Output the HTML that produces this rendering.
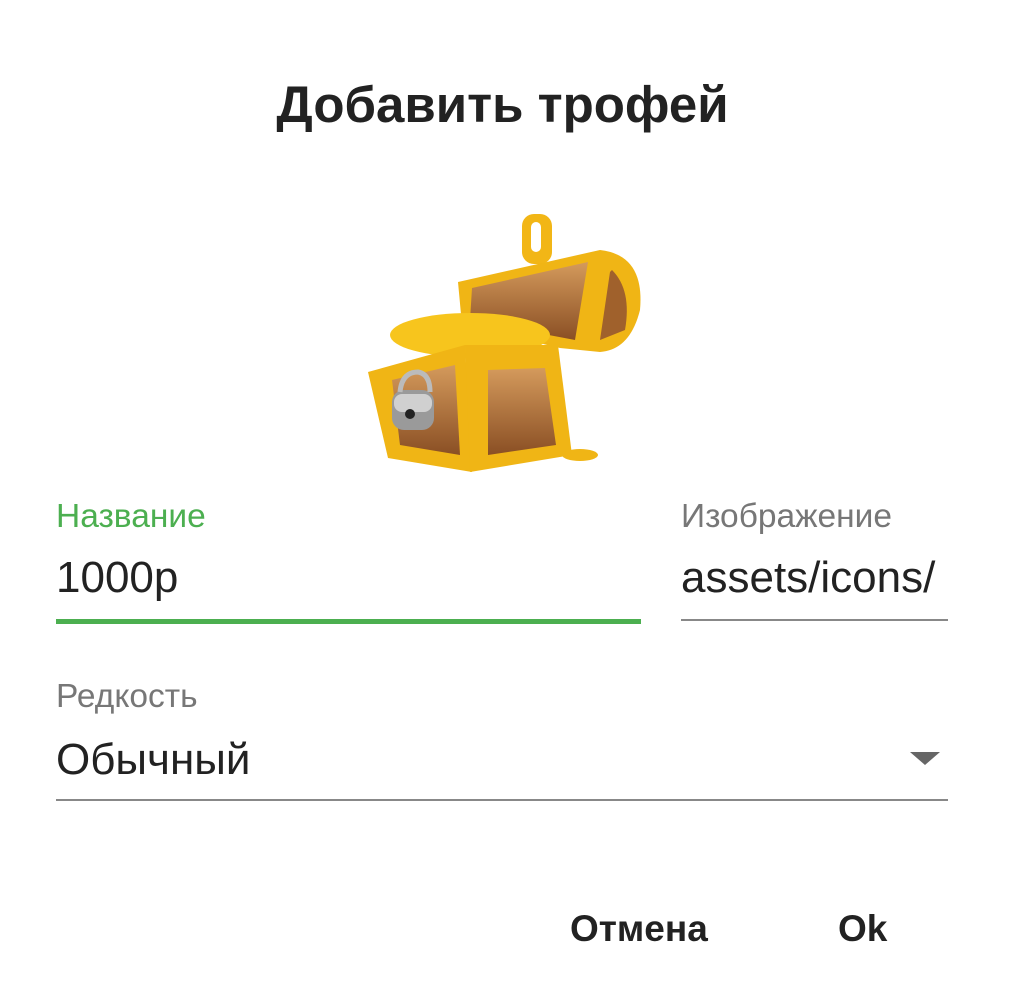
<!DOCTYPE html>
<html><head><meta charset="utf-8"><style>
body{margin:0;width:1011px;height:989px;background:#fff;font-family:"Liberation Sans",sans-serif;position:relative;overflow:hidden}
.a{position:absolute;white-space:nowrap}
</style></head><body>
<div class="a" style="left:0;width:1005px;text-align:center;top:75px;font-size:51px;font-weight:bold;color:#222">Добавить трофей</div>
<svg class="a" style="left:0;top:0" width="1011" height="989">
<defs><linearGradient id="w" x1="0" y1="0" x2="0" y2="1"><stop offset="0" stop-color="#d49a5c"/><stop offset="1" stop-color="#8a4f24"/></linearGradient></defs>
<rect x="522" y="214" width="30" height="50" rx="12" fill="#f2b616"/>
<rect x="531" y="222" width="10" height="30" rx="5" fill="#fff"/>
<path d="M458 282 L600 250 Q645 255 640 310 Q630 350 600 352 L560 348 L462 325 Z" fill="#f0b515"/>
<path d="M472 288 L588 262 L575 340 L470 320 Z" fill="url(#w)"/>
<path d="M612 270 Q632 290 625 330 L600 340 L610 272 Z" fill="#a0612c"/>
<ellipse cx="470" cy="335" rx="80" ry="22" fill="#f7c51d"/>
<path d="M368 372 L465 345 L472 472 L388 458 Z" fill="#f0b515"/>
<path d="M392 380 L455 365 L460 455 L400 445 Z" fill="url(#w)"/>
<path d="M465 345 L558 345 L572 455 L470 472 Z" fill="#f0b515"/>
<path d="M488 370 L545 368 L556 445 L488 455 Z" fill="url(#w)"/>
<rect x="392" y="390" width="42" height="40" rx="12" fill="#9a9a9a"/>
<rect x="394" y="394" width="38" height="18" rx="8" fill="#d0d0d0"/>
<circle cx="410" cy="414" r="5" fill="#222"/>
<path d="M400 392 Q402 372 418 372 Q430 374 430 392" stroke="#bbb" stroke-width="5" fill="none"/>
<ellipse cx="580" cy="455" rx="18" ry="6" fill="#f0b515"/>
</svg>
<div class="a" style="left:56px;top:498px;font-size:33.5px;color:#4caf50">Название</div>
<div class="a" style="left:56px;top:553px;font-size:44px;color:#222">1000р</div>
<div class="a" style="left:56px;top:619px;width:585px;height:5px;background:#4caf50"></div>
<div class="a" style="left:681px;top:498px;font-size:33.5px;color:#777">Изображение</div>
<div class="a" style="left:681px;top:553px;width:267px;overflow:hidden;font-size:44px;color:#222">assets/icons/</div>
<div class="a" style="left:681px;top:619px;width:267px;height:2px;background:#888"></div>
<div class="a" style="left:56px;top:678px;font-size:33.5px;color:#777">Редкость</div>
<div class="a" style="left:56px;top:735px;font-size:44px;color:#222">Обычный</div>
<svg class="a" style="left:910px;top:752px" width="32" height="14"><path d="M0 0 L30 0 L15 13 Z" fill="#666"/></svg>
<div class="a" style="left:56px;top:799px;width:892px;height:2px;background:#888"></div>
<div class="a" style="left:570px;top:908px;font-size:37px;font-weight:bold;color:#222">Отмена</div>
<div class="a" style="left:838px;top:908px;font-size:37px;font-weight:bold;color:#222">Ok</div>
</body></html>
